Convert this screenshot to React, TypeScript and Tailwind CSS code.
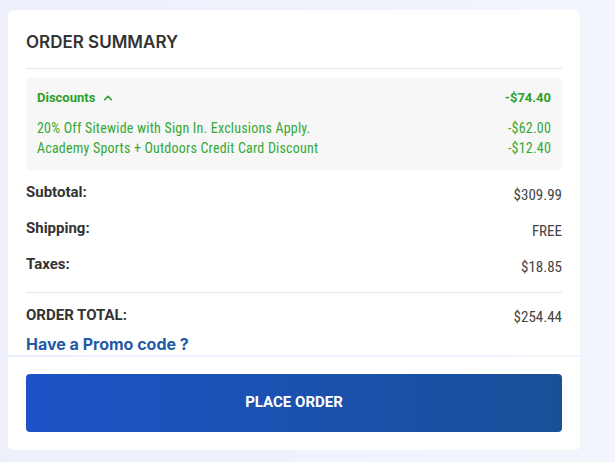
import { ChevronUp } from "lucide-react";

const discounts = [
  { label: "20% Off Sitewide with Sign In. Exclusions Apply.", amount: "-$62.00" },
  { label: "Academy Sports + Outdoors Credit Card Discount", amount: "-$12.40" },
];

const lines = [
  { label: "Subtotal:", value: "$309.99" },
  { label: "Shipping:", value: "FREE" },
  { label: "Taxes:", value: "$18.85" },
];

const bold = "font-['Roboto',sans-serif] font-bold";
const reg = "font-['Roboto_Condensed','Roboto',sans-serif]";

export default function App() {
  return (
    <div className="min-h-[462px] w-full bg-gradient-to-r from-[#edf0fb] to-[#f3f5fd] pt-[10px] pl-[8px]">
      <div className="w-[572px] flex flex-col gap-[2px]">
        {/* Summary card */}
        <div className="bg-white rounded-t-[5px] px-[18px] pt-[20px] pb-0">
          <h2 className="font-['Inter',sans-serif] font-semibold text-[17px] leading-[24px] text-[#333]">
            ORDER SUMMARY
          </h2>
          <div className="mt-[14px] h-px bg-[#e6e6e6]" />

          <div className="mt-[9px] bg-[#f7f7f7] rounded-[3px] px-[11px] pt-[10px] pb-[12px]">
            <div className="flex justify-between items-center h-[20px] text-[#2b9f2b]">
              <div className="flex items-center gap-[6px]">
                <span className={`${bold} text-[13px]`}>Discounts</span>
                <ChevronUp size={14} strokeWidth={2.5} />
              </div>
              <span className={`${bold} text-[13px]`}>-$74.40</span>
            </div>
            <div className="mt-[10px]">
              {discounts.map((d) => (
                <div
                  key={d.label}
                  className={`${reg} flex justify-between h-[20px] items-center text-[14px] tracking-[0.2px] text-[#36a836]`}
                >
                  <span>{d.label}</span>
                  <span>{d.amount}</span>
                </div>
              ))}
            </div>
          </div>

          <div className="mt-[12px] flex flex-col gap-[16px]">
            {lines.map((l) => (
              <div key={l.label} className="flex justify-between items-start h-[20px]">
                <span className={`${bold} text-[15px] leading-[20px] text-[#333]`}>{l.label}</span>
                <span className={`${reg} text-[15px] leading-[20px] mt-[3px] text-[#444]`}>{l.value}</span>
              </div>
            ))}
          </div>

          <div className="mt-[18px] h-px bg-[#e6e6e6]" />

          <div className="mt-[12px] flex justify-between items-start h-[20px]">
            <span className={`${bold} text-[15px] leading-[20px] text-[#333]`}>ORDER TOTAL:</span>
            <span className={`${reg} text-[15px] leading-[20px] mt-[2px] text-[#444]`}>$254.44</span>
          </div>

          <div className="mt-[9px] pb-[1px] font-['Inter',sans-serif] font-bold text-[16px] leading-[20px] text-[#1f5aa6]">
            Have a Promo code ?
          </div>
        </div>

        {/* Action card */}
        <div className="bg-white rounded-b-[5px] px-[18px] pt-[17px] pb-[18px]">
          <button className="w-full h-[58px] pb-[4px] rounded-[4px] bg-gradient-to-r from-[#1d53c7] to-[#1a4f98] text-white">
            <span className={`${bold} text-[15px]`}>PLACE ORDER</span>
          </button>
        </div>
      </div>
    </div>
  );
}
